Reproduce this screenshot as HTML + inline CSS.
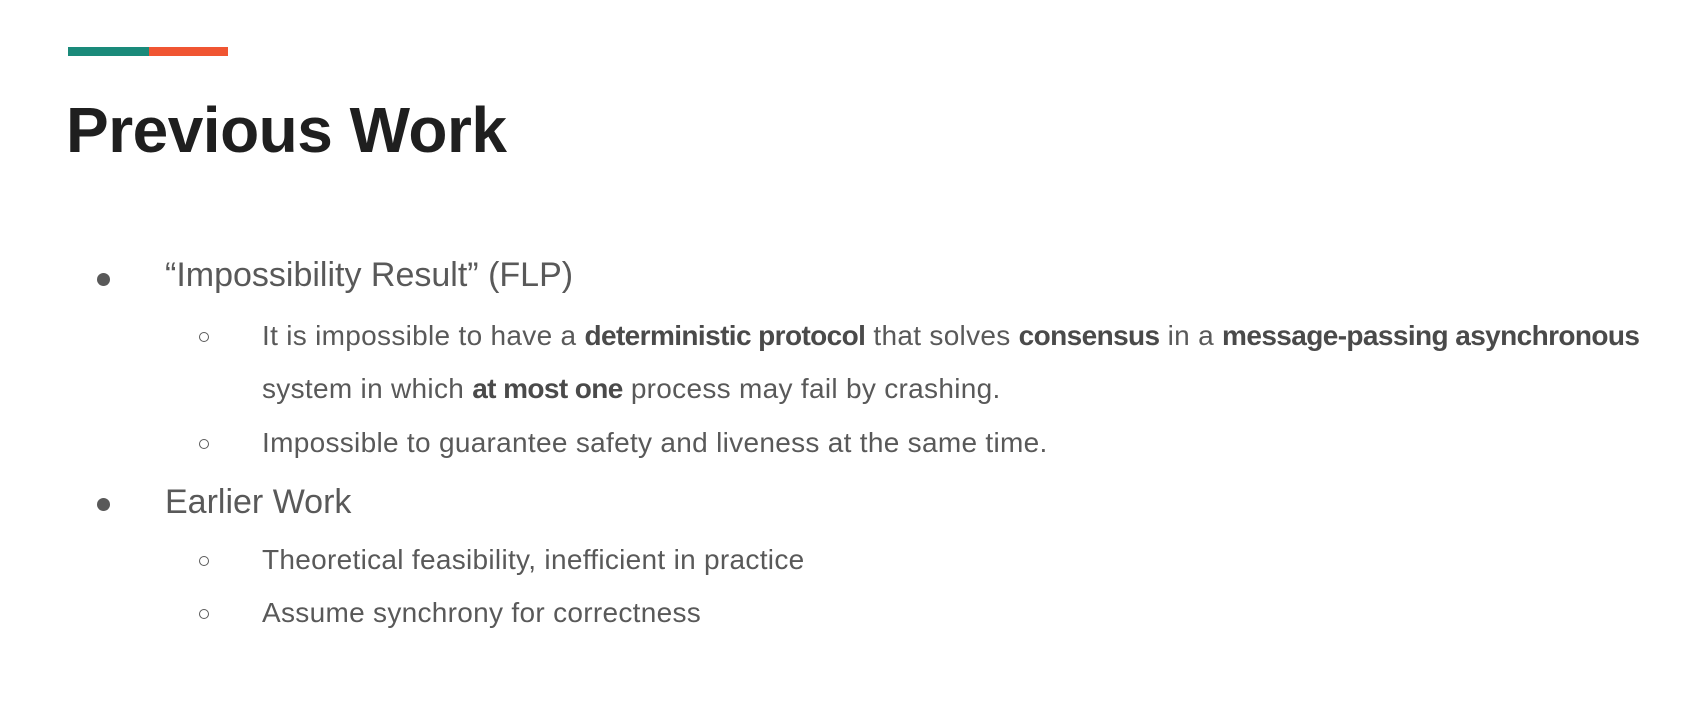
<!DOCTYPE html>
<html><head><meta charset="utf-8"><style>
body{margin:0;width:1698px;height:708px;background:#fff;position:relative;overflow:hidden;font-family:"Liberation Sans",sans-serif;}
.a{position:absolute;white-space:nowrap;}
.t{color:#1f1f1f;font-weight:bold;font-size:64px;letter-spacing:-0.5px;}
.l1{color:#595959;font-size:34px;}
.l2{color:#595959;font-size:28px;letter-spacing:0.3px;}
b{color:#4a4a4a;letter-spacing:-0.6px;}
.dot{position:absolute;width:13px;height:13px;border-radius:50%;background:#595959;}
.circ{position:absolute;width:8px;height:8px;border-radius:50%;border:1.3px solid #595959;}
</style></head><body>
<div class="a" style="left:68px;top:47px;width:81px;height:9px;background:#1a8a7a"></div>
<div class="a" style="left:149px;top:47px;width:79px;height:9px;background:#f05532"></div>
<div class="a t" style="left:66px;top:130px;line-height:0">Previous Work</div>

<div class="dot" style="left:97px;top:273px"></div>
<div class="a l1" style="left:165px;top:275px;line-height:0">“Impossibility Result” (FLP)</div>

<div class="circ" style="left:199px;top:332px"></div>
<div class="a l2" style="left:262px;top:336px;line-height:0">It is impossible to have a <b>deterministic protocol</b> that solves <b>consensus</b> in a <b>message-passing asynchronous</b></div>
<div class="a l2" style="left:262px;top:389px;line-height:0">system in which <b>at most one</b> process may fail by crashing.</div>
<div class="circ" style="left:199px;top:439px"></div>
<div class="a l2" style="left:262px;top:443px;line-height:0">Impossible to guarantee safety and liveness at the same time.</div>

<div class="dot" style="left:97px;top:498px"></div>
<div class="a l1" style="left:165px;top:502px;line-height:0">Earlier Work</div>

<div class="circ" style="left:199px;top:556px"></div>
<div class="a l2" style="left:262px;top:560px;line-height:0">Theoretical feasibility, inefficient in practice</div>
<div class="circ" style="left:199px;top:609px"></div>
<div class="a l2" style="left:262px;top:613px;line-height:0">Assume synchrony for correctness</div>
</body></html>
